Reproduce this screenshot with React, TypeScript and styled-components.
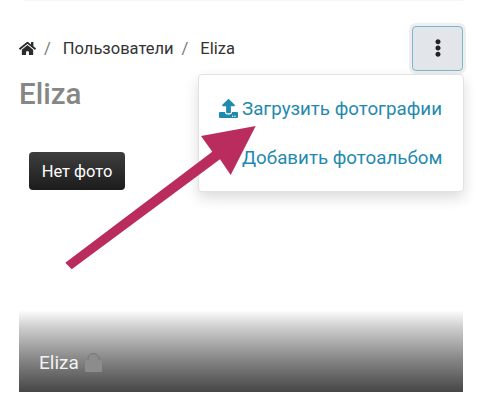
import React from "react";
import styled, { createGlobalStyle } from "styled-components";
import { FaHome, FaEllipsisV, FaUpload } from "react-icons/fa";

const Global = createGlobalStyle`
  html, body { margin: 0; padding: 0; background: #fff; }
  body { width: 480px; height: 406px; overflow: hidden; font-family: Roboto, "Noto Sans", sans-serif; }
`;

const Page = styled.div`
  position: relative;
  width: 480px;
  height: 406px;
  padding: 0 17px 0 19px;
  box-sizing: border-box;
  display: flex;
  flex-direction: column;
  background: #fff;
`;

const TopEdge = styled.div`
  height: 1px;
  margin: 0 0 25px 5px;
  background: #f5f5f5;
`;

const TopBar = styled.div`
  display: flex;
  align-items: center;
  justify-content: space-between;
  height: 44px;
`;

const Crumbs = styled.nav`
  display: flex;
  align-items: center;
  font-size: 16.5px;
  color: #333;
`;

const Sep = styled.span`
  color: #777;
  margin: 0 12px 0 8px;
`;

const MenuButton = styled.button`
  width: 51px;
  height: 45px;
  box-sizing: border-box;
  border: 1px solid #7fb6c9;
  border-radius: 4px;
  background: #e2e6ea;
  box-shadow: 0 0 0 3px #eceef0;
  display: flex;
  align-items: center;
  justify-content: center;
  color: #222;
  padding: 0;
`;

const Title = styled.h1`
  margin: 7px 0 0;
  font-size: 29.5px;
  line-height: 34px;
  font-weight: 500;
  color: #868686;
`;

const NoPhoto = styled.div`
  align-self: flex-start;
  margin: 41px 0 0 10px;
  width: 96px;
  height: 38px;
  box-sizing: border-box;
  border-radius: 4px;
  background: linear-gradient(#3e3e3e, #1c1c1c);
  color: #fff;
  font-size: 16.5px;
  display: flex;
  align-items: center;
  justify-content: center;
`;

const Banner = styled.div`
  margin-top: 120px;
  height: 82px;
  background: linear-gradient(#ffffff, #d0d0d0 20%, #8a8a8a 58%, #464646);
  display: flex;
  align-items: flex-end;
  padding: 0 0 18px 20px;
  box-sizing: border-box;
  color: #f2f2f2;
  font-size: 19px;
  gap: 6px;
`;

const Lock = styled.svg`
  display: block;
  margin-bottom: 2px;
`;

const Menu = styled.div`
  position: absolute;
  left: 198px;
  top: 74px;
  width: 266px;
  height: 118px;
  box-sizing: border-box;
  background: #fff;
  border: 1px solid #e2e2e2;
  border-radius: 4px;
  box-shadow: 0 6px 14px rgba(0, 0, 0, 0.14);
  padding: 9px 0 0 20px;
  display: flex;
  flex-direction: column;
`;

const MenuItem = styled.a`
  display: flex;
  align-items: center;
  height: 49px;
  color: #1f8aae;
  font-size: 18.75px;
  gap: 4px;
`;

const MenuIcon = styled.span<{ $empty?: boolean }>`
  display: flex;
  width: 19px;
  visibility: ${(p) => (p.$empty ? "hidden" : "visible")};
`;

const Arrow = styled.svg`
  position: absolute;
  left: 0;
  top: 0;
  pointer-events: none;
`;

export default function App() {
  return (
    <Page>
      <Global />
      <TopEdge />
      <TopBar>
        <Crumbs>
          <FaHome size={17} color="#2b2b2b" />
          <Sep>/</Sep>
          <span>Пользователи</span>
          <Sep>/</Sep>
          <span>Eliza</span>
        </Crumbs>
        <MenuButton aria-label="menu">
          <FaEllipsisV size={18} />
        </MenuButton>
      </TopBar>
      <Title>Eliza</Title>
      <NoPhoto>Нет фото</NoPhoto>
      <Banner>
        <span>Eliza</span>
        <Lock width="17" height="19" viewBox="0 0 17 19">
          <path
            fill="#8c8c8c"
            d="M2.500 7V6a6 6 0 0 1 12 0v1h1A1.500 1.500 0 0 1 17 8.500v9a1.500 1.500 0 0 1-1.500 1.500h-14A1.500 1.500 0 0 1 0 17.500v-9A1.500 1.500 0 0 1 1.500 7z"
          />
          <path
            fill="none"
            stroke="#777"
            strokeWidth="1"
            d="M3 7V6a5.500 5.500 0 0 1 11 0v1"
          />
        </Lock>
      </Banner>
      <Menu>
        <MenuItem>
          <MenuIcon>
            <FaUpload size={19} />
          </MenuIcon>
          <span>Загрузить фотографии</span>
        </MenuItem>
        <MenuItem>
          <MenuIcon $empty />
          <span>Добавить фотоальбом</span>
        </MenuItem>
      </Menu>
      <Arrow width="480" height="406" viewBox="0 0 480 406">
        <polygon
          fill="#b92c5d"
          points="255.700,126 201,136 212.300,151.700 65.300,262.700 71.700,269.300 220,159.300 230.700,175"
        />
      </Arrow>
    </Page>
  );
}
